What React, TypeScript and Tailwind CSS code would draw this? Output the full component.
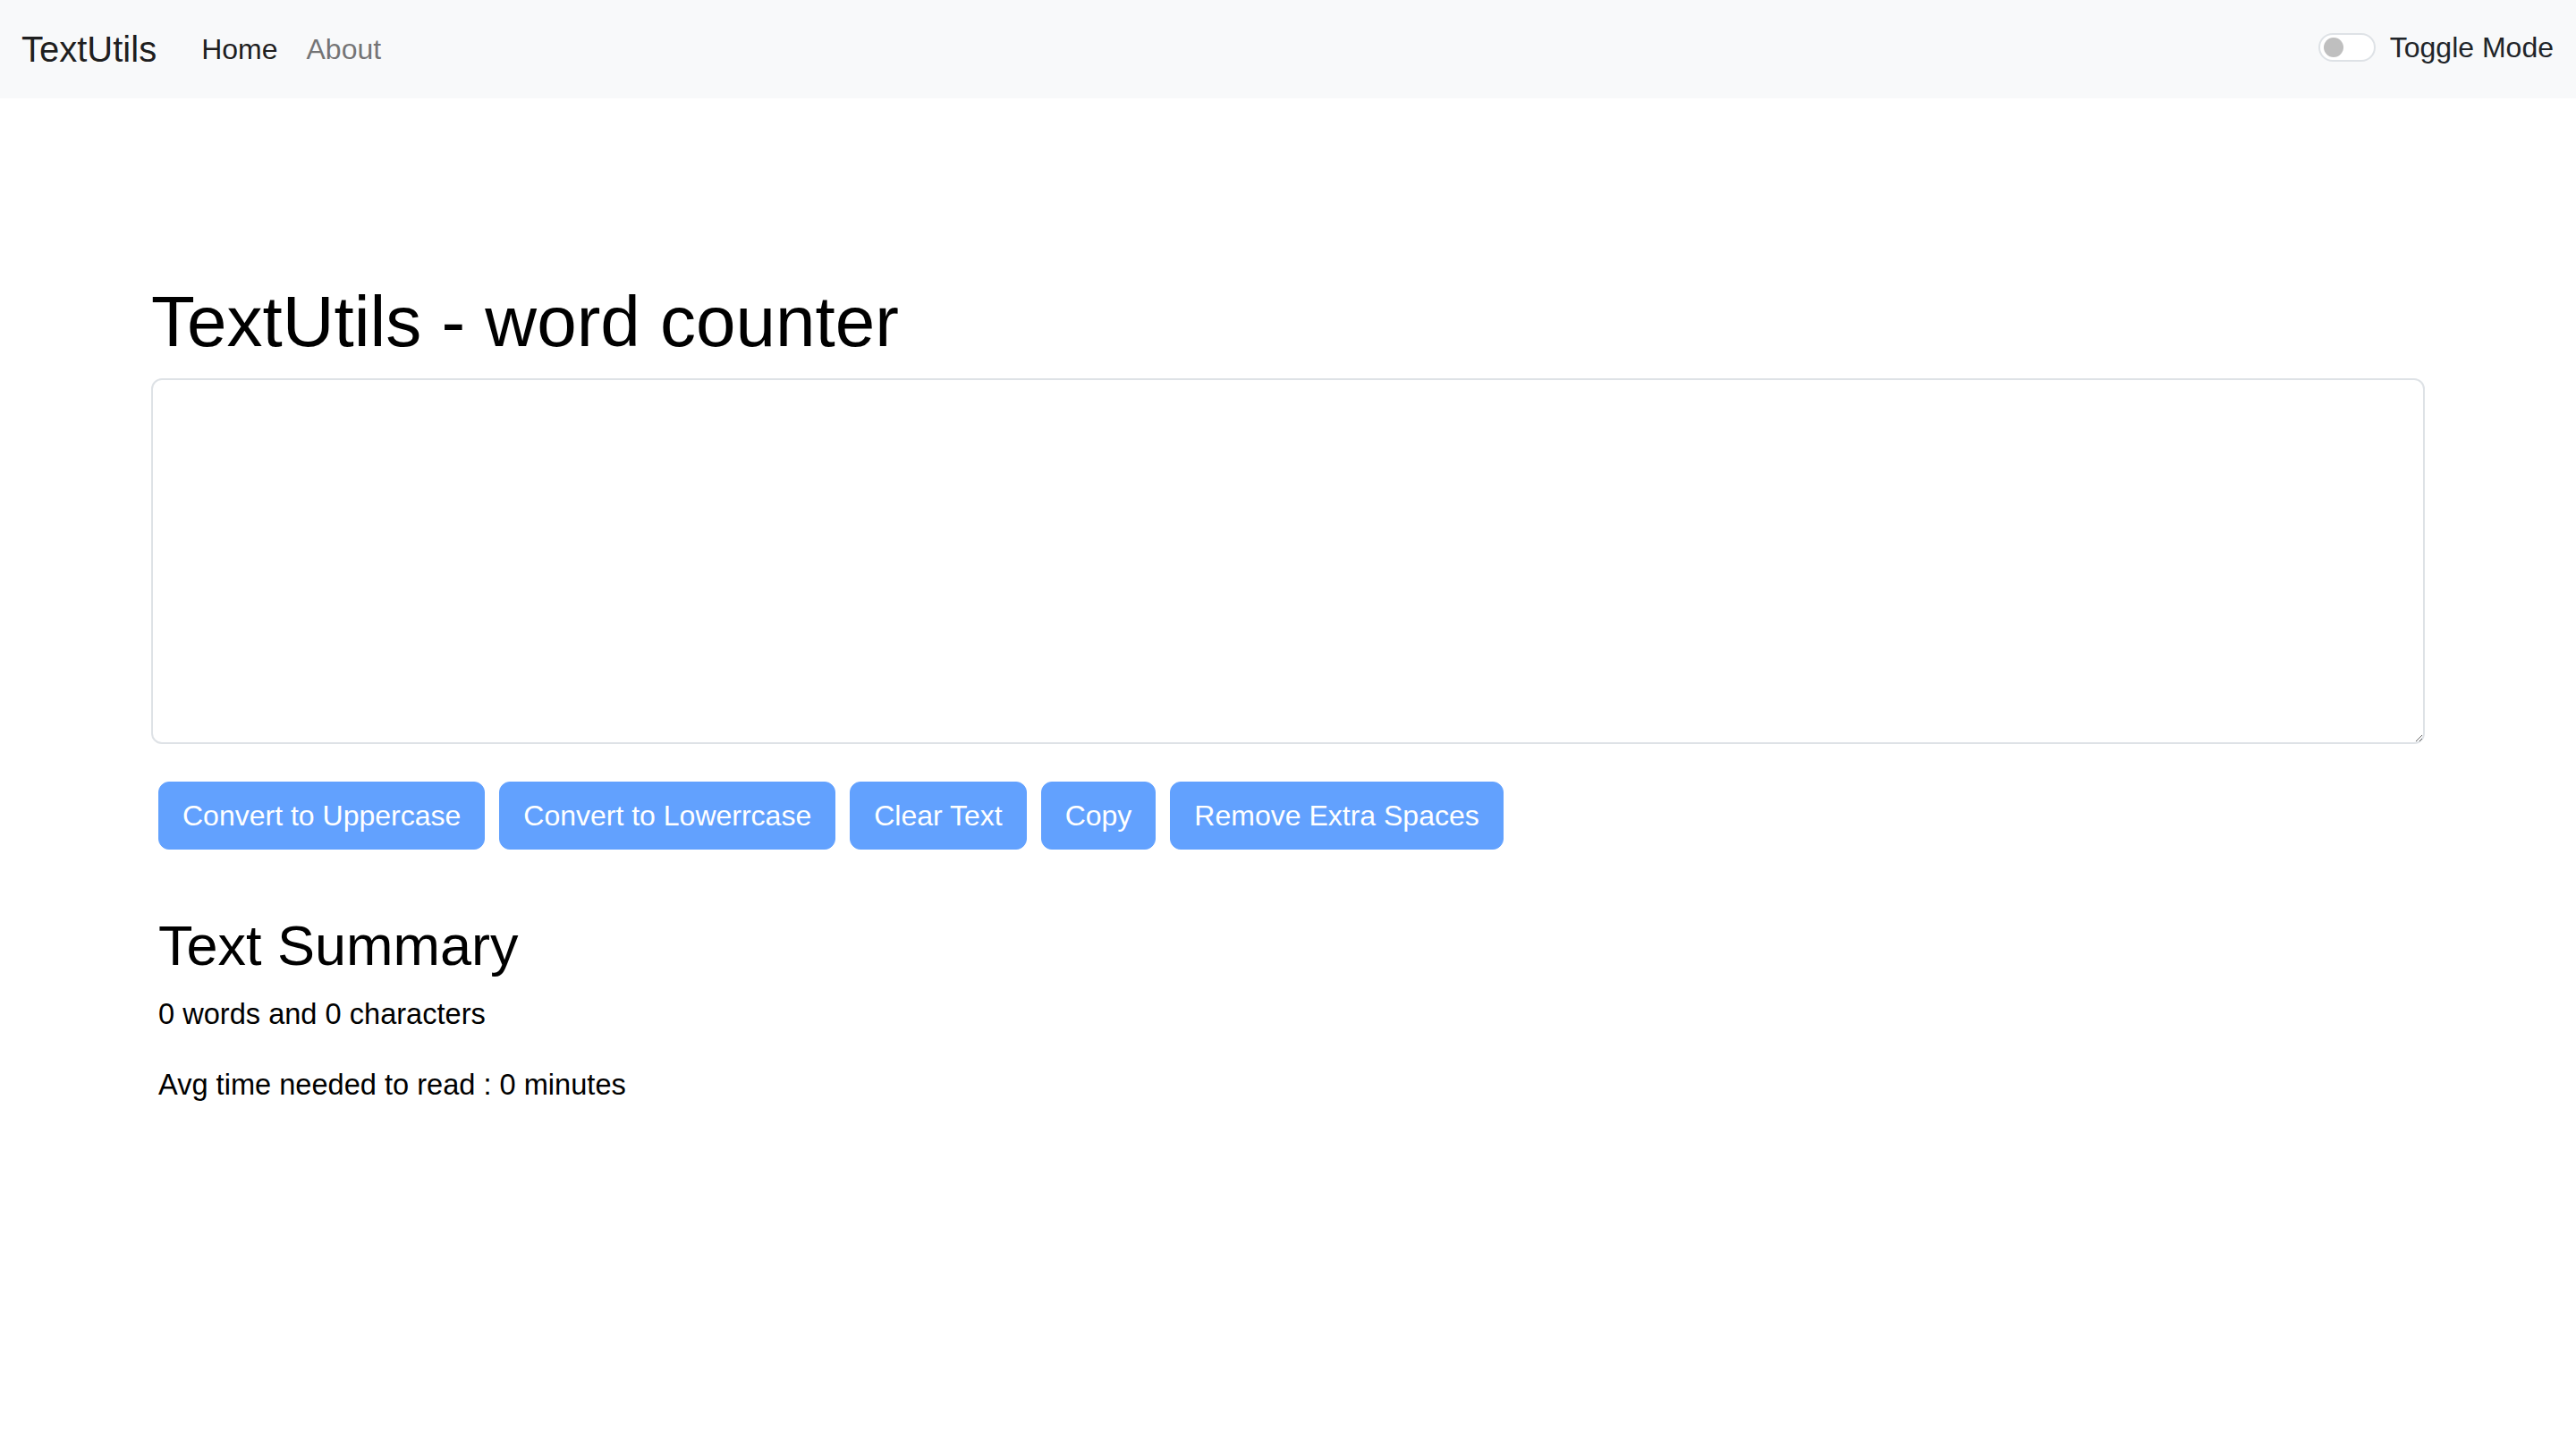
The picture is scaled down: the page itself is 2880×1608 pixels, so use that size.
import { useState } from 'react';

const btnClass =
  'h-[76px] mx-[8px] px-[26px] rounded-[12px] border border-[#62a1fe] bg-[#62a1fe] text-white text-[32px] leading-none';

function Navbar() {
  return (
    <nav className="h-[110px] bg-[#f8f9fa] flex items-center justify-between pl-[24px] pr-[25px]">
      <div className="flex items-center">
        <a className="text-[40px] leading-[60px] text-black/90 mr-[34px]">TextUtils</a>
        <a className="px-[16px] text-[32px] leading-[48px] text-black/90">Home</a>
        <a className="px-[16px] text-[32px] leading-[48px] text-black/55">About</a>
      </div>
      <label className="flex items-center gap-[16px] -mt-[4px]">
        <span className="w-[64px] h-[32px] rounded-full border-2 border-[#dee2e6] bg-white flex items-center pl-[4px]">
          <span className="w-[22px] h-[22px] rounded-full bg-[#bfbfbf]" />
        </span>
        <span className="text-[32px] leading-[48px] text-[#212529]">Toggle Mode</span>
      </label>
    </nav>
  );
}

export default function App() {
  const [text, setText] = useState('');
  const words = text.split(/\s+/).filter(w => w.length > 0).length;

  return (
    <div className="min-h-[1608px] bg-white font-['Liberation_Sans',Arial,sans-serif]">
      <Navbar />
      <main className="w-[2542px] mx-auto pt-[202px]">
        <h1 className="text-[80px] leading-[96px] text-black mb-[15px]">TextUtils - word counter</h1>
        <textarea
          value={text}
          onChange={e => setText(e.target.value)}
          className="block w-full h-[409px] border-2 border-[#dee2e6] rounded-[12px] bg-white outline-none p-[12px] text-[32px]"
        />
        <div className="flex mt-[42px]">
          <button className={btnClass}>Convert to Uppercase</button>
          <button className={btnClass}>Convert to Lowerrcase</button>
          <button className={btnClass}>Clear Text</button>
          <button className={btnClass}>Copy</button>
          <button className={btnClass}>Remove Extra Spaces</button>
        </div>
        <section className="pl-[8px] mt-[70px] text-black">
          <h2 className="text-[63px] leading-[74px] mb-[16px]">Text Summary</h2>
          <p className="text-[32.6px] leading-[48px] mb-[31px]">
            {words} words and {text.length} characters
          </p>
          <p className="text-[32.6px] leading-[48px]">Avg time needed to read : {0.008 * words} minutes</p>
        </section>
      </main>
    </div>
  );
}
